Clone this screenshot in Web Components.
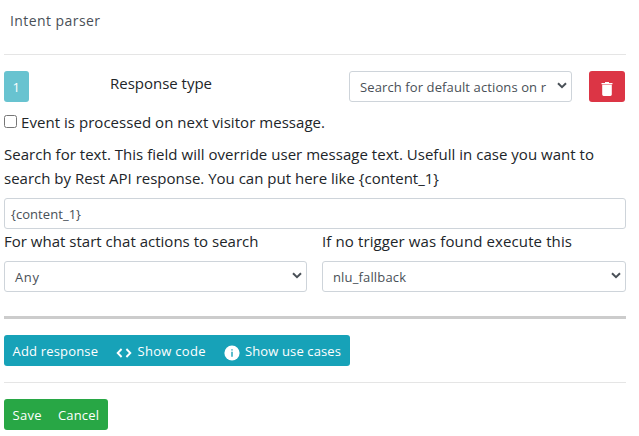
<!DOCTYPE html>
<html lang="en">
<head>
<meta charset="utf-8">
<title>Intent parser</title>
<style>
body{margin:0;background:#fff;color:#212529;font-family:"Open Sans","Noto Sans",sans-serif;font-size:15px}
</style>
</head>
<body>
<trigger-editor></trigger-editor>
<script>
// One line of text spread evenly over the width given in "w".
customElements.define('fit-text', class extends HTMLElement {
  connectedCallback() {
    const w = +this.getAttribute('w');
    const root = this.attachShadow({mode: 'open'});
    root.innerHTML = `<style>:host{display:block;flex:none;white-space:pre;width:${w}px;line-height:24px}</style><span></span>`;
    const span = root.querySelector('span');
    span.textContent = this.getAttribute('text');
    const count = span.textContent.length - 1;
    if (count) span.style.letterSpacing = ((w - span.getBoundingClientRect().width) / count).toFixed(3) + 'px';
  }
});
customElements.define('ui-rule', class extends HTMLElement {
  connectedCallback() {
    this.attachShadow({mode: 'open'}).innerHTML =
      `<style>:host{display:block;height:1px;background:#e5e5e5}:host([thick]){height:3px;background:#ccc}</style>`;
  }
});
customElements.define('ui-field', class extends HTMLElement {
  connectedCallback() {
    this.attachShadow({mode: 'open'}).innerHTML = `<style>
      :host{display:flex;align-items:center;justify-content:space-between;box-sizing:border-box;height:31px;
        border:1px solid #ced4da;border-radius:3px;background:#fff;color:#495057;font-size:13px;padding:1px 4px 0 10px}
      :host([input]){padding-left:6px}
      svg{display:block;flex:none;margin-top:-3px}
      </style><slot></slot>${this.hasAttribute('input') ? '' :
      '<svg width="10" height="7" viewBox="0 0 10 7"><path d="M1 1.2 5 5.1 9 1.2" fill="none" stroke="#495057" stroke-width="2"/></svg>'}`;
  }
});
customElements.define('ui-button', class extends HTMLElement {
  connectedCallback() {
    this.attachShadow({mode: 'open'}).innerHTML = `<style>
      :host{display:flex;align-items:center;box-sizing:border-box;height:31px;border-radius:3px;
        padding:1px 9px 0 8.5px;width:max-content;background:#17a2b8;color:#fff;font-size:13px}
      :host([kind=green]){background:#28a745}
      :host([kind=red]){background:#dc3545;width:36px;padding:5px 0 0;justify-content:center}
      :host([kind=index]){background:#68c3d0;width:25px;padding:1px 0 0;justify-content:center}
      </style><slot></slot>`;
  }
});
customElements.define('ui-icon', class extends HTMLElement {
  connectedCallback() {
    const icons = {
      trash: '<svg width="12" height="14" viewBox="0 0 12 14"><path fill="#fff" d="M.5 1H4V0h4v1h3.5v1.2H.5zM1.2 2.8h9.6V12.6a1.4 1.4 0 0 1-1.4 1.4H2.6a1.4 1.4 0 0 1-1.4-1.4z"/></svg>',
      code: '<svg width="16" height="10" viewBox="0 0 16 10"><path d="M5.6 1 1.7 5l3.9 4M10.4 1l3.9 4-3.9 4" fill="none" stroke="#fff" stroke-width="1.9"/></svg>',
      info: '<svg width="16" height="16" viewBox="0 0 16 16"><circle cx="8" cy="8" r="7.6" fill="#fff"/><path d="M7.3 4.2h1.4v1.4H7.3zM7.3 6.8h1.4v5H7.3z" fill="#17a2b8"/></svg>'
    };
    this.attachShadow({mode: 'open'}).innerHTML =
      `<style>:host{display:block;flex:none}svg{display:block}</style>` + icons[this.getAttribute('name')];
  }
});
customElements.define('trigger-editor', class extends HTMLElement {
  connectedCallback() {
    this.attachShadow({mode: 'open'}).innerHTML = `<style>
      :host{display:block;box-sizing:border-box;width:639px;height:436px;padding:9px 13px 0 4px;overflow:hidden}
      header{height:45px;padding-left:6px;color:#495057;font-size:14px}
      .top{display:flex;margin-top:16px;height:31px}
      .top > fit-text{margin:0 0 0 81px}
      .top ui-field{width:223px;margin-left:137px}
      .top ui-button[kind=red]{margin-left:17px}
      .check{display:flex;align-items:center;gap:4px;margin-top:8px;height:24px}
      input{margin:-1px 0 0;width:13px;height:13px}
      .help{margin-top:8px;height:49px}
      .cols{display:grid;grid-template-columns:303px 304px;gap:15px;height:63px}
      .cols ui-field{margin-top:8px}
      .main{margin-top:16px}
      .code{margin:3px 6px 0 17.5px}.info{margin:3px 5.5px 0 18px}
      </style>
      <header><fit-text w="90" text="Intent parser"></fit-text></header>
      <ui-rule></ui-rule>
      <div class="top">
        <ui-button kind="index"><fit-text w="8" text="1"></fit-text></ui-button>
        <fit-text w="102" text="Response type"></fit-text>
        <ui-field><fit-text w="186" text="Search for default actions on r"></fit-text></ui-field>
        <ui-button kind="red"><ui-icon name="trash"></ui-icon></ui-button>
      </div>
      <div class="check"><input type="checkbox"><fit-text w="304" text="Event is processed on next visitor message."></fit-text></div>
      <div class="help">
        <fit-text w="590" text="Search for text. This field will override user message text. Usefull in case you want to"></fit-text>
        <fit-text w="435" text="search by Rest API response. You can put here like {content_1}"></fit-text>
      </div>
      <ui-field input style="margin-top:7px"><fit-text w="70" text="{content_1}"></fit-text></ui-field>
      <div class="cols">
        <div><fit-text w="254.5" text="For what start chat actions to search"></fit-text>
          <ui-field><fit-text w="24" text="Any"></fit-text></ui-field></div>
        <div><fit-text w="250" text="If no trigger was found execute this"></fit-text>
          <ui-field><fit-text w="73" text="nlu_fallback"></fit-text></ui-field></div>
      </div>
      <ui-rule thick style="margin-top:24px"></ui-rule>
      <ui-button class="main">
        <fit-text w="85.5" text="Add response"></fit-text>
        <ui-icon class="code" name="code"></ui-icon><fit-text w="68" text="Show code"></fit-text>
        <ui-icon class="info" name="info"></ui-icon><fit-text w="96" text="Show use cases"></fit-text>
      </ui-button>
      <ui-rule style="margin-top:16px"></ui-rule>
      <ui-button kind="green" class="main"><fit-text w="29" text="Save"></fit-text><fit-text style="margin-left:16.5px" w="41" text="Cancel"></fit-text></ui-button>`;
  }
});
</script>
</body>
</html>
